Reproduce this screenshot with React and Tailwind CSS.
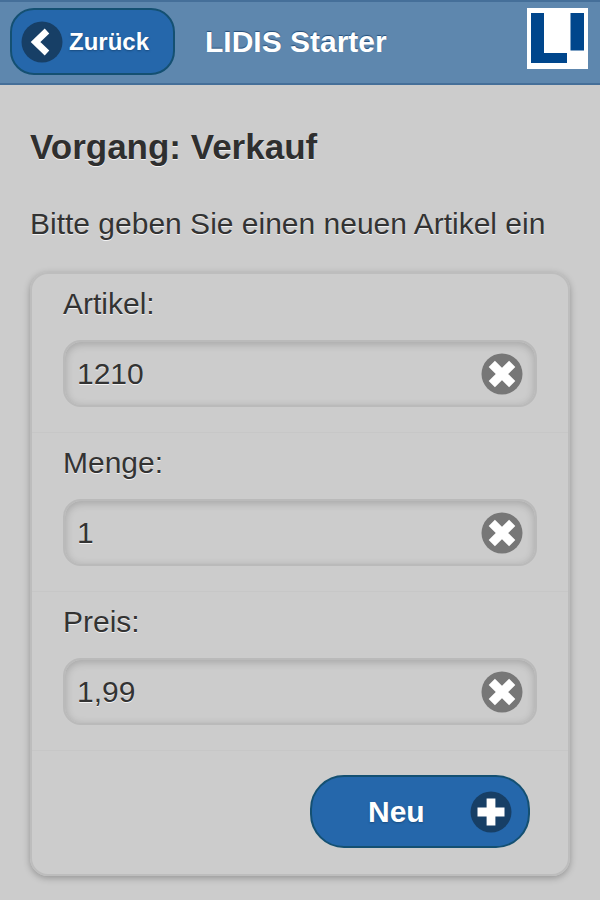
import { useState } from "react";

const fields = [
  { id: "artikel", label: "Artikel:", initial: "1210" },
  { id: "menge", label: "Menge:", initial: "1" },
  { id: "preis", label: "Preis:", initial: "1,99" },
];

function Field({ id, label, initial }) {
  const [value, setValue] = useState(initial);
  return (
    <div className="flex flex-col border-b border-[#c7c7c7] px-[31px] pt-[10px] pb-[25px]">
      <label htmlFor={id} className="h-14 text-[30px] leading-10">
        {label}
      </label>
      <div className="flex h-[67px] items-center rounded-[18px] border-2 border-[#bababa] pr-3 shadow-[inset_0_2px_8px_rgba(0,0,0,0.2)]">
        <input
          id={id}
          type="text"
          value={value}
          onChange={(e) => setValue(e.target.value)}
          className="h-full min-w-0 flex-1 bg-transparent pl-3 text-[30px] text-[#333333] outline-none [text-shadow:0_1px_0_#f3f3f3]"
        />
        <button type="button" aria-label="Eingabe löschen" onClick={() => setValue("")} className="shrink-0">
          <svg className="block size-[42px]" viewBox="0 0 42 42">
            <circle cx="21" cy="21" r="20.5" fill="#777777" />
            <path d="M10.8 10.8 31.2 31.2M31.2 10.8 10.8 31.2" stroke="#ffffff" strokeWidth="8.8" />
          </svg>
        </button>
      </div>
    </div>
  );
}

export default function App() {
  return (
    <div className="min-h-screen bg-[#cccccc] font-['Liberation_Sans',Arial,sans-serif] text-[#333333]">
      <header className="flex items-start border-y-2 border-[#456f99] bg-[#5e87ae] pt-[6px] pr-3 pb-2 pl-[10px] font-bold text-white">
        <a
          href="#zurueck"
          className="flex h-[67px] w-[165px] items-center gap-[6px] rounded-[24px] border-2 border-[#145072] bg-[#2567ab] pl-[9px] text-[24px] [text-shadow:0_1px_2px_#194b7e]"
        >
          <svg className="size-[42px] shrink-0" viewBox="0 0 42 42">
            <circle cx="21" cy="21" r="20.5" fill="#173f66" />
            <path d="M26 10 14.5 21 26 32" fill="none" stroke="#ffffff" strokeWidth="6.6" />
          </svg>
          Zurück
        </a>
        <h1 className="ml-[30px] flex-1 text-[30px] leading-[67px] [text-shadow:0_-1px_1px_#254f7a]">LIDIS Starter</h1>
        <svg className="size-[61px] shrink-0" viewBox="0 0 61 61" role="img" aria-label="LIDIS">
          <path d="M0 0h61v61H0z" fill="#ffffff" />
          <path d="M4 5h13v40h23v10H4zM43.500 5h13.500v37.500H43.500z" fill="#00468c" />
        </svg>
      </header>
      <main className="px-[30px] pt-10 pb-6 [text-shadow:0_1px_0_#f3f3f3]">
        <h2 className="text-[35px] leading-[44px] font-bold text-[#2f2f2f]">Vorgang: Verkauf</h2>
        <p className="mt-[35px] text-[30px] leading-10 whitespace-nowrap">Bitte geben Sie einen neuen Artikel ein</p>
        <form
          onSubmit={(e) => e.preventDefault()}
          className="mt-7 rounded-[18px] border-2 border-[#bdbdbd] shadow-[0_2px_7px_rgba(0,0,0,0.28)]"
        >
          {fields.map((f) => (
            <Field key={f.id} {...f} />
          ))}
          <div className="flex justify-end px-[38px] pt-6 pb-[26px]">
            <button
              type="submit"
              className="flex h-[73px] w-[220px] items-center justify-between rounded-[34px] border-2 border-[#145072] bg-[#2567ab] pr-4 pl-14 text-[30px] font-bold text-white [text-shadow:0_1px_2px_#194b7e]"
            >
              Neu
              <svg className="size-[42px]" viewBox="0 0 42 42">
                <circle cx="21" cy="21" r="20.5" fill="#173f66" />
                <path d="M21 7.500V34.500M7.500 21H34.500" stroke="#ffffff" strokeWidth="8.8" />
              </svg>
            </button>
          </div>
        </form>
      </main>
    </div>
  );
}
